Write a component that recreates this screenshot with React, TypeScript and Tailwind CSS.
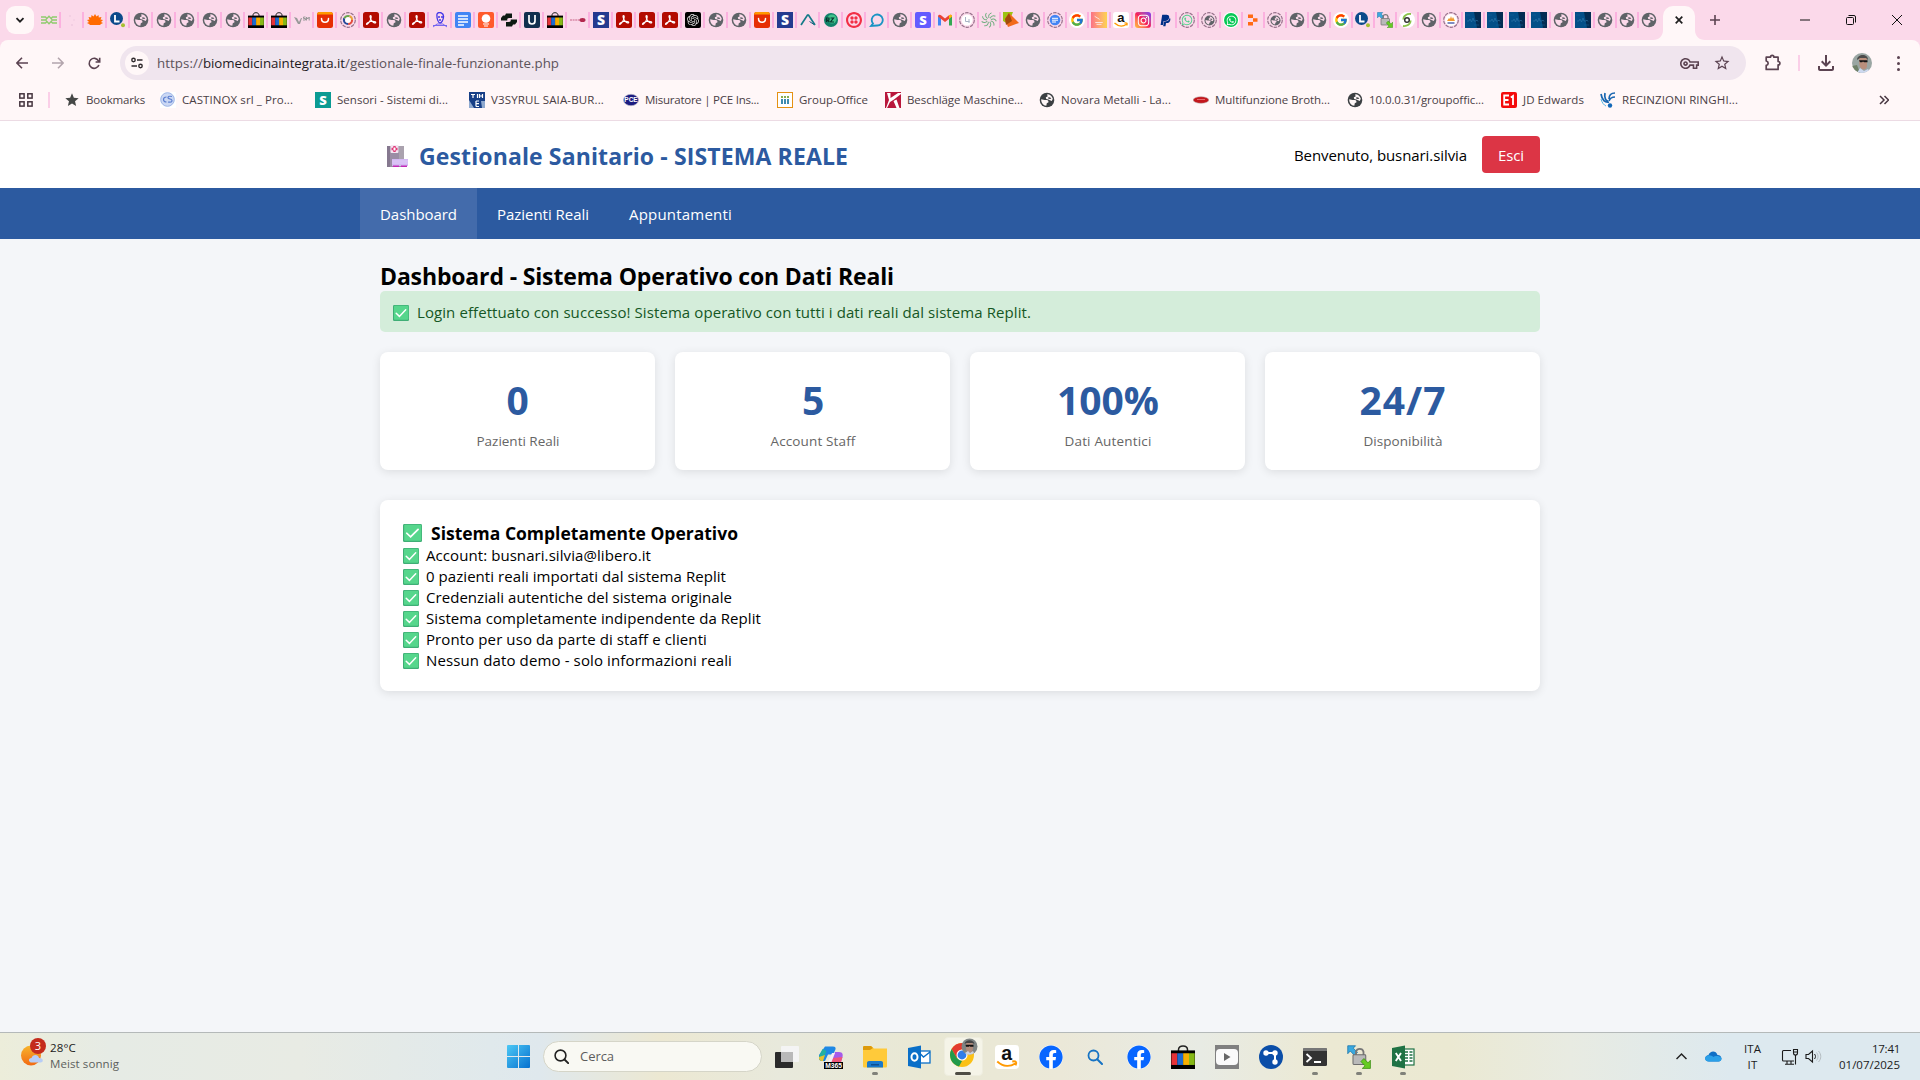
import { useLayoutEffect, useRef, useState } from "react";
import type { ReactNode } from "react";
import { FaWhatsapp, FaInstagram, FaPaypal, FaFacebook } from "react-icons/fa";
import { FcGoogle } from "react-icons/fc";
import { MdOutlineVpnKey, MdStarBorder, MdStar, MdOutlineFileDownload } from "react-icons/md";
import { SiOpenai, SiTwilio } from "react-icons/si";

/* Single line of text whose tracking is adjusted so that it spans a given width. */
function Fit({ w, children, className = "" }: { w: number; children: string; className?: string }) {
  const ref = useRef<HTMLSpanElement>(null);
  const [ls, setLs] = useState(0);
  useLayoutEffect(() => {
    if (ref.current) setLs((w - ref.current.getBoundingClientRect().width) / children.length);
  }, [w, children]);
  return (
    <span ref={ref} className={`inline-block whitespace-nowrap ${className}`} style={{ letterSpacing: `${ls}px` }}>
      {children}
    </span>
  );
}

function Svg({ children, s = 16, vb = 16 }: { children: ReactNode; s?: number; vb?: number }) {
  return (
    <svg width={s} height={s} viewBox={`0 0 ${vb} ${vb}`} fill="none" className="block shrink-0">
      {children}
    </svg>
  );
}

const Globe = ({ color = "#5f6368", bg = "#fbd9ea", s = 16 }: { color?: string; bg?: string; s?: number }) => (
  <Svg s={s}>
    <circle cx="8" cy="8" r="7.300" fill={color} />
    <path d="M2.200 7.300L5.600 8.100H8c1 .3 1.600 1 1.500 2.200L7.800 11.200 7.300 13.800C4.300 13.500 2 11 2.200 7.300z" fill={bg} />
    <path d="M8.200 2.200c2.600 0 5 2 5.600 4.600L12.800 9 11 8.200 9.400 7.600 7.200 7 6.800 5.200 8.600 4.500z" fill={bg} />
    <path d="M9.300 5.200l2 .2 1 1.300-1.700.4-1.500-.5z" fill={color} />
  </Svg>
);

const Dashed = ({ children }: { children: ReactNode }) => (
  <span className="grid size-4 place-items-center">
    <span className="col-start-1 row-start-1">
      <Svg>
        <circle cx="8" cy="8" r="7.300" stroke="#96718a" strokeWidth="1.200" strokeDasharray="3.600 1" />
      </Svg>
    </span>
    <span className="col-start-1 row-start-1 grid place-items-center">{children}</span>
  </span>
);

const Bag = ({ s = 16 }: { s?: number }) => (
  <Svg s={s}>
    <path d="M5 5V3.200C5 1.500 6.300.7 8 .7s3 .8 3 2.500V5" stroke="#222" strokeWidth="1" />
    <rect y="3.600" width="16" height="12.400" fill="#000" />
    <rect x=".3" y="5.500" width="3.900" height="7.800" fill="#e53238" />
    <rect x="4.200" y="5.500" width="3.900" height="7.800" fill="#1d6bd0" />
    <rect x="8.100" y="5.500" width="3.900" height="7.800" fill="#f5af02" />
    <rect x="12" y="5.500" width="3.800" height="7.800" fill="#86b817" />
  </Svg>
);

const Ali = () => (
  <Svg>
    <rect width="16" height="16" rx="2.500" fill="#e62e04" />
    <path d="M0 2.500A2.500 2.500 0 0 1 2.500 0h11A2.500 2.500 0 0 1 16 2.500z" fill="#ff9900" />
    <path d="M4.500 6.500c0 5 7 5 7 0" stroke="#fff" strokeWidth="1.500" strokeLinecap="round" />
  </Svg>
);

const Pdf = () => (
  <Svg>
    <rect width="16" height="16" rx="2.500" fill="#b30b00" />
    <path d="M7.500 3.500c1.200 0 .8 3-.6 5.600S3.600 13 3.400 12.100C3.200 11 7 9.400 9.500 9.300s3.700.7 3.100 1.500c-.8.9-3.800-1.300-4.800-3.500s-1-3.800-.3-3.800z" stroke="#fff" strokeWidth="1.100" />
  </Svg>
);

const Letter = ({ bg, ch, r = 0, size = 14 }: { bg: string; ch: string; r?: number; size?: number }) => (
  <Svg>
    <rect width="16" height="16" rx={r} fill={bg} />
    <text x="8" y="12.800" textAnchor="middle" fontSize={size} fontWeight="800" fill="#fff" fontFamily="Open Sans, sans-serif">{ch}</text>
  </Svg>
);

const LBlue = () => (
  <Svg>
    <circle cx="6.500" cy="6.500" r="6.500" fill="#0b4a8b" />
    <path d="M5 3v6.500h4.500" stroke="#fff" strokeWidth="1.800" />
    <circle cx="13" cy="13.300" r="2" fill="#a7c030" />
  </Svg>
);

const Amazon = ({ s = 16 }: { s?: number }) => (
  <Svg s={s}>
    <rect width="16" height="16" rx="2.500" fill="#fff" />
    <text x="7.800" y="9.800" textAnchor="middle" fontSize="13" fontWeight="800" fill="#111" fontFamily="Liberation Sans, sans-serif">a</text>
    <path d="M1.500 11c4 3.600 8.500 3.700 12 1.300M11.500 11c2.500-.4 3.200.2 2.200 2.600" stroke="#ff9900" strokeWidth="1.300" />
  </Svg>
);

const GoogleG = () => (
  <span className="flex size-4 items-center justify-center rounded-full bg-white">
    <FcGoogle size={14} />
  </span>
);

const LockSync = ({ s = 16 }: { s?: number }) => (
  <Svg s={s}>
    <path d="M.5.500h5.200L4.200 2.100 7 5 5 7 2.200 4 .5 5.800z" fill="#3aa9df" stroke="#1572a8" strokeWidth=".5" />
    <path d="M6 7V4.500a2.600 2.600 0 0 1 5 0V7" stroke="#777" strokeWidth="1.200" />
    <rect x="4" y="6.500" width="8.500" height="6.500" rx=".6" fill="#b9b9b9" stroke="#6e6e6e" strokeWidth=".7" />
    <path d="M15.600 15.600h-5.400l1.800-1.700L9.300 11l2-2 2.700 2.900 1.600-1.700z" fill="#66cc22" stroke="#358a10" strokeWidth=".5" />
  </Svg>
);

const Ecg = () => (
  <Svg>
    <rect width="16" height="16" fill="#034f88" />
    <path d="M9 0h7v16h-4z" fill="#032c53" />
    <path d="M2 9h2l1-2 1.500 3 1.500-4 1 3h2l1-1 1 1.500" stroke="#3178ab" strokeWidth=".6" />
    <path d="M1 3h4M9 13h5" stroke="#14659d" strokeWidth=".5" />
  </Svg>
);

const Docs = () => (
  <Svg>
    <rect width="16" height="16" rx="2" fill="#4285f4" />
    <path d="M3 4h10M3 7h10M3 10h10M3 13h6" stroke="#fff" strokeWidth="1.500" />
  </Svg>
);

const leftTabs: ReactNode[] = [
  <Svg><path d="M0 5h4.500l1 1M0 8h4M0 11h4.500l1-1M16 5h-4.500l-1 1M16 8h-4M16 11h-4.500l-1-1M4.500 8L8 4.200 11.500 8 8 11.800z" stroke="#8fcb6d" strokeWidth="1.300" /></Svg>,
  <Svg><circle cx="6" cy="4" r="1" fill="#f0cbe0" /><circle cx="10" cy="8" r="1" fill="#f3cfe3" /><circle cx="8" cy="13" r="1" fill="#efc9df" /></Svg>,
  <Svg><path d="M2 12l-2-1 2-1-2-2 2.500-.5L1.500 5l2.700.5L4.500 3l2 1.500L8 2l1.500 2.500 2-1.500.3 2.500 2.700-.5-1 2.500L16 8l-2 2 2 1-2 1-1 1H3z" fill="#ff6a00" /></Svg>,
  <LBlue />, <Globe />, <Globe />, <Globe />, <Globe />, <Globe />, <Bag />, <Bag />,
  <Svg><path d="M0 5l3 1 2 4 2-4h1l-2 6H4z" fill="#999" /><path d="M11.500 5H9.500v1.500h2V8H9M12.500 8.500V5l1.300 2L15.200 5v3.500" stroke="#999" strokeWidth="1" /></Svg>,
  <Ali />,
  <Dashed><Svg><circle cx="8" cy="8" r="4" stroke="#e34c3d" strokeWidth="2.200" strokeDasharray="6 19" /><circle cx="8" cy="8" r="4" stroke="#244b9b" strokeWidth="2.200" strokeDasharray="8 17" strokeDashoffset="-6" /><circle cx="8" cy="8" r="4" stroke="#6aa84f" strokeWidth="2.200" strokeDasharray="6 19" strokeDashoffset="-14" /><circle cx="8" cy="8" r="4" stroke="#e8a33a" strokeWidth="2.200" strokeDasharray="5 20" strokeDashoffset="-20" /><circle cx="8" cy="8" r="2.800" fill="#fff" /></Svg></Dashed>,
  <Pdf />, <Globe />, <Pdf />,
  <Svg><path d="M5 2c2-3 7-1 6.500 3C11.300 8 9.500 11 8 11S4.500 7 5 2zM6 5h2M9 5h2M7 8h2" stroke="#4337e8" strokeWidth="1.300" /><path d="M1 15l4-3h6l4 3M1 13.500h14" stroke="#6a5cf0" strokeWidth=".9" /></Svg>,
  <Docs />,
  <Svg><rect width="16" height="16" rx="2" fill="#ff5a2b" /><circle cx="8" cy="6.500" r="4.300" fill="#fff" /><path d="M5 12h6M6 14h4" stroke="#fff" strokeWidth="1.200" /></Svg>,
  <Svg><path d="M5 1.500h6V6H8.500L7 8.500H0V6l2-2.500h2zM11 14.500H5V10h2.500L9 7.500h7V10l-2 2.500h-2z" fill="#0d1a12" /><circle cx="8" cy="8" r="1.900" fill="#fbd9ea" /></Svg>,
  <Svg><rect width="16" height="16" rx="2" fill="#112f4e" /><path d="M5 3v6c0 4 6 4 6 0V3" stroke="#fff" strokeWidth="1.700" /></Svg>,
  <Bag />,
  <Svg><path d="M0 8h10" stroke="#d98aa8" strokeWidth="1.500" strokeDasharray="2 .6" /><ellipse cx="12.500" cy="8" rx="3" ry="2" fill="#b2284e" /></Svg>,
  <Letter bg="#243a8f" ch="S" />, <Pdf />, <Pdf />, <Pdf />,
  <span className="flex size-4 items-center justify-center rounded-xs bg-black"><SiOpenai size={12} color="#ddd" /></span>,
  <Globe />, <Globe />, <Ali />, <Letter bg="#243a8f" ch="S" />,
  <Svg><path d="M1 13L7.500 3h1L15 13" stroke="#147a88" strokeWidth="1.700" /><path d="M9.500 9.500l4.500 3" stroke="#1b5a80" strokeWidth="1" /></Svg>,
  <Svg><circle cx="8" cy="8" r="7" fill="#11836a" /><circle cx="9" cy="7" r="4.500" fill="#41c28a" /><path d="M3.500 10V6H6v2H4l2.500 2M7.500 6h3l-3 4h3.500" stroke="#06342e" strokeWidth="1.200" /></Svg>,
  <SiTwilio size={16} color="#f22f46" />,
  <Svg><path d="M2 14l2-2.500A5.500 5.500 0 1 1 8 13.500z" stroke="#1b94c4" strokeWidth="1.800" /></Svg>,
  <Globe />, <Letter bg="#635bff" ch="S" r={2} size={13} />,
];

const Swirl = ({ c }: { c: string }) => (
  <Svg>
    {[0, 40, 80, 120, 160, 200, 240, 280, 320].map((a) => (
      <path key={a} d="M8 6C7 4 8 1.500 10.500 1" stroke={c} strokeWidth="1" transform={`rotate(${a} 8 8)`} />
    ))}
  </Svg>
);

const rightTabs: ReactNode[] = [
  <Svg><path d="M1 13.500V4l3 2v7.500z" fill="#4285f4" /><path d="M12 13.500V6l3-2v9.500z" fill="#34a853" /><path d="M1 4.500C1 2.500 3 2.500 4 3.300L8 6.500l4-3.200c1-.8 3-.8 3 1.200L8 10z" fill="#ea4335" /><path d="M12 3.300c1-.8 3-.8 3 1.200L12 7z" fill="#fbbc04" /></Svg>,
  <Dashed><Svg><circle cx="8" cy="8" r="5.500" fill="#fff" /><path d="M6.500 5v4.500h4M10 7v4" stroke="#a9b4c6" /></Svg></Dashed>,
  <Swirl c="#6fae7f" />,
  <Svg><path d="M0 0h10L5 12 0 9z" fill="#9dc412" /><path d="M6 1l10 10-11 4-3-8z" fill="#f26a1b" /><path d="M6 1l3 8-6 4-1-6z" fill="#a34b0c" /></Svg>,
  <Globe />,
  <Dashed><Svg><circle cx="8" cy="8" r="5.300" fill="#4285f4" /><path d="M5 6.300h6M5 8.200h6M5 10h4" stroke="#fff" /></Svg></Dashed>,
  <GoogleG />,
  <span className="flex size-4 items-start bg-linear-to-r from-[#fb7185] to-[#fcd34d] p-[3px]"><Svg s={10}><path d="M1 2l8 5M2 12h12M4 15h8" stroke="#fde4e4" strokeWidth="1.500" /></Svg></span>,
  <Amazon />,
  <span className="flex size-4 items-center justify-center rounded-[3px] bg-linear-to-bl from-[#7a2cf5] via-[#f5175b] to-[#ffc02e]"><FaInstagram size={13} color="#fff" /></span>,
  <span className="grid size-4 place-items-center"><FaPaypal size={13} color="#003087" /></span>,
  <Dashed><FaWhatsapp size={12} color="#4fd08a" /></Dashed>,
  <Dashed><Globe s={11} /></Dashed>,
  <span className="flex size-4 items-center justify-center rounded-full bg-white"><span className="flex size-3.5 items-center justify-center rounded-full bg-[#06c755]"><FaWhatsapp size={11} color="#fff" /></span></span>,
  <Svg><path d="M3 2.500h5V6H3zM8 6.300h4.500v3.400H8zM3 10h5v3.500H3z" fill="#ff6a13" /></Svg>,
  <Dashed><Globe s={11} /></Dashed>,
  <Globe />, <Globe />, <GoogleG />, <LBlue />, <LockSync />,
  <Svg><circle cx="8" cy="8" r="8" fill="#fff" /><path d="M12 2C8 1.500 4 4 4.500 7.500M4 14c4 .5 8-2 7.500-5.500" stroke="#8bc34a" strokeWidth="1.800" /><circle cx="8" cy="8" r="2.300" stroke="#333" strokeWidth="1.500" /></Svg>,
  <Globe />,
  <Dashed><Svg><circle cx="8" cy="8" r="6" fill="#fff" /><path d="M4 9l2-3 1 1 1-3 1 3 1-2 2 4z" fill="#f29a2e" /><path d="M4.500 11h7" stroke="#3b4fa0" strokeWidth="1.300" /></Svg></Dashed>,
  <Ecg />, <Ecg />, <Ecg />, <Ecg />, <Globe />, <Ecg />, <Globe />, <Globe />, <Globe />,
];

function TabStrip() {
  return (
    <div className="flex h-10 items-start bg-[#fbd9ea]">
      <div className="mt-1.5 ml-1.5 flex h-7 w-7 shrink-0 items-center justify-center rounded-[9px] bg-[#fff7f8]">
        <Svg s={10} vb={10}><path d="M1.500 3.200L5 6.700l3.500-3.500" stroke="#1f1f1f" strokeWidth="1.800" /></Svg>
      </div>
      <div className="ml-1 flex h-10 items-center">
        {leftTabs.map((icon, i) => (
          <div key={i} className="flex h-4 w-[23px] shrink-0 items-center justify-end gap-0.5">
            <span className="flex size-4 items-center justify-center">{icon}</span>
            <span className="h-4 w-0.5 bg-[#fbb1df]" />
          </div>
        ))}
        {rightTabs.map((icon, i) => (
          <div key={i} className="flex h-4 w-[22px] shrink-0 items-center gap-0.5 pl-0.5">
            <span className="flex size-4 items-center justify-center">{icon}</span>
            {i < rightTabs.length - 1 && <span className="h-4 w-0.5 bg-[#fbb1df]" />}
          </div>
        ))}
      </div>
      <div className="-ml-2 flex h-10 items-end">
        <Svg s={10} vb={10}><path d="M10 0v10H0C6 10 10 6 10 0z" fill="#fff7f8" /></Svg>
        <div className="flex h-[34px] w-8 items-center justify-center rounded-t-[10px] bg-[#fff7f8] pb-1.5">
          <Svg s={8} vb={8}><path d="M.7.7l6.600 6.600M7.300.7L.7 7.300" stroke="#1f1f1f" strokeWidth="1.700" /></Svg>
        </div>
        <Svg s={10} vb={10}><path d="M0 0v10h10C4 10 0 6 0 0z" fill="#fff7f8" /></Svg>
      </div>
      <div className="ml-[5px] flex h-10 items-center">
        <Svg s={10} vb={10}><path d="M5 0v10M0 5h10" stroke="#5b4351" strokeWidth="1.600" /></Svg>
      </div>
      <div className="mr-[18px] ml-auto flex h-10 items-center gap-9">
        <Svg s={10} vb={10}><path d="M0 5h10" stroke="#111" /></Svg>
        <Svg s={10} vb={10}><rect x=".5" y="2.500" width="7" height="7" rx="1" stroke="#111" /><path d="M2.500.5H8A1.500 1.500 0 0 1 9.500 2v5.500" stroke="#111" /></Svg>
        <Svg s={10} vb={10}><path d="M0 0l10 10M10 0L0 10" stroke="#111" /></Svg>
      </div>
    </div>
  );
}

function Avatar({ s }: { s: number }) {
  return (
    <span className="block overflow-hidden rounded-full">
      <Svg s={s} vb={20}>
        <rect width="20" height="20" fill="#9aa6a3" />
        <path d="M0 13l5-1 3 8H0z" fill="#6f8068" />
        <path d="M7 5h8v8c0 3-3 4-5 3s-3-4-3-11z" fill="#b98f7c" />
        <path d="M5 7c0-6 11-7 11 0l-2-2H8z" fill="#4c4b4b" />
        <path d="M7 7.200h8.500v2h-3.500l-1-.8-.8.8H8z" fill="#151515" />
        <path d="M5 20l3-5 4 3 4-2 3 4z" fill="#cdd9f0" />
      </Svg>
    </span>
  );
}

function Toolbar() {
  return (
    <div className="bg-[#fbd9ea]">
      <div className="flex h-[46px] items-center rounded-t-[8px] bg-[#fff7f8] text-[#5b4351]">
        <div className="ml-4 flex w-[104px] shrink-0 items-center gap-6">
          <Svg s={12} vb={12}><path d="M12 6H1.200M6 .8L.9 6 6 11.200" stroke="#5b4351" strokeWidth="1.600" /></Svg>
          <Svg s={12} vb={12}><path d="M0 6h10.800M6 .8L11.100 6 6 11.200" stroke="#b3a5ad" strokeWidth="1.600" /></Svg>
          <Svg s={13} vb={13}><path d="M10.900 8A5 5 0 1 1 10.500 3.800L11.600 5M11.700 .8V5H7.600" stroke="#5b4351" strokeWidth="1.600" /></Svg>
        </div>
        <div className="flex h-[34px] w-[1626px] shrink-0 items-center rounded-full bg-[#f0e5ee] pl-[5px]">
          <span className="flex size-6 items-center justify-center rounded-full bg-[#fff7f8]">
            <Svg s={14} vb={14}>
              <circle cx="3.500" cy="4" r="1.700" stroke="#2f2a2d" strokeWidth="1.400" /><path d="M7 4h5.500M1.500 10H7" stroke="#2f2a2d" strokeWidth="1.500" /><circle cx="10.500" cy="10" r="1.700" stroke="#2f2a2d" strokeWidth="1.400" />
            </Svg>
          </span>
          <span className="ml-2 flex pt-px text-[13.300px] text-[#5c535a]">
            <Fit w={46}>https://</Fit>
            <Fit w={142} className="text-[#1f1a1e]">biomedicinaintegrata.it</Fit>
            <Fit w={214}>/gestionale-finale-funzionante.php</Fit>
          </span>
          <span className="mr-[15px] ml-auto flex items-center gap-3.5 text-[#5b4351]">
            <MdOutlineVpnKey size={19} />
            <MdStarBorder size={18} />
          </span>
        </div>
        <span className="ml-[18px]"><Svg s={18} vb={18}><path d="M2.200 3.200h4.300c0-2.400 3.400-2.400 3.400 0h4.200v4.300c2.400 0 2.400 3.400 0 3.400v4.500H2.200v-4c2.600-.6 2.600-3.800 0-4.400z" stroke="#5b4351" strokeWidth="1.700" strokeLinejoin="round" /></Svg></span>
        <span className="ml-4 h-4 w-0.5 bg-[#fbcfe8]" />
        <span className="ml-3.5"><MdOutlineFileDownload size={24} /></span>
        <span className="ml-3.5"><Avatar s={20} /></span>
        <span className="ml-[25px] flex flex-col gap-[3px]">
          <i className="size-[3px] rounded-full bg-[#5b4351]" /><i className="size-[3px] rounded-full bg-[#5b4351]" /><i className="size-[3px] rounded-full bg-[#5b4351]" />
        </span>
      </div>
    </div>
  );
}

type Bookmark = { label: string; tw: number; cell: string; icon: ReactNode };
const bookmarks: Bookmark[] = [
  { label: "Bookmarks", tw: 59, cell: "w-24", icon: <MdStar size={16} color="#454746" /> },
  { label: "CASTINOX srl _ Pro...", tw: 111, cell: "w-[155px]", icon: <Svg><rect width="16" height="16" fill="#fff" /><circle cx="7.500" cy="7.500" r="6.800" fill="#cbd8f4" stroke="#9bb3e6" /><path d="M6.500 5c-4 0-4 5 0 5M12 4.500c-5-1-5 2-2 2.500s3 4-2 3" stroke="#5d7fd0" strokeWidth="1.200" /></Svg> },
  { label: "Sensori - Sistemi di...", tw: 111, cell: "w-[154px]", icon: <Letter bg="#0b9b93" ch="S" size={13} /> },
  { label: "V3SYRUL SAIA-BUR...", tw: 113, cell: "w-[154px]", icon: <Svg><rect width="16" height="16" fill="#173f87" /><path d="M2 2.500h4M4 2.500V6M8.500 2v4M10.500 2v4M10.500 4h3M13.500 2v4M7 9v5.500M7 9h3M7 11.700h3M7 14.500h3" stroke="#fff" strokeWidth="1.200" /><path d="M0 8l5 8H0zM12 9h4v7h-3z" fill="#8fa9cf" /></Svg> },
  { label: "Misuratore | PCE Ins...", tw: 114, cell: "w-[154px]", icon: <Svg><ellipse cx="8" cy="8" rx="7.500" ry="5.700" fill="#1c1c80" stroke="#b5b5c8" strokeWidth=".7" /><text x="8" y="10.300" textAnchor="middle" fontSize="6.500" fontWeight="800" fill="#fff" fontFamily="Liberation Sans">PCE</text></Svg> },
  { label: "Group-Office", tw: 69, cell: "w-[108px]", icon: <Svg><rect x=".5" y=".5" width="15" height="15" fill="#fff" stroke="#e59113" /><path d="M5 7v5M8 7v5M11 7v5" stroke="#2a7fa8" strokeWidth="1.800" /><path d="M5 4v2M8 4v2M11 4v2" stroke="#7da43c" strokeWidth="1.800" /></Svg> },
  { label: "Beschläge Maschine...", tw: 116, cell: "w-[154px]", icon: <Svg><rect width="16" height="16" fill="#b9173c" /><path d="M2 1h3.500v5L13 1h3v1L9 7.500 5 10l-3 6H1l3-8zM8.500 9l3-1.500 3 8.500h-3z" fill="#fff" /></Svg> },
  { label: "Novara Metalli - La...", tw: 110, cell: "w-[154px]", icon: <Globe color="#3c4043" bg="#fff7f8" /> },
  { label: "Multifunzione Broth...", tw: 115, cell: "w-[154px]", icon: <Svg><ellipse cx="8" cy="8" rx="7.800" ry="3.300" fill="#c4171d" stroke="#b0a0a0" strokeWidth=".5" /><path d="M4 7.500h8" stroke="#e8686c" /></Svg> },
  { label: "10.0.0.31/groupoffic...", tw: 115, cell: "w-[154px]", icon: <Globe color="#3c4043" bg="#fff7f8" /> },
  { label: "JD Edwards", tw: 61, cell: "w-[99px]", icon: <Svg><rect width="16" height="16" rx="2" fill="#f40b0b" /><path d="M8 3.500H3.200v9H8M3.200 8H7.500M9.800 5.500L12 4v9" stroke="#fff" strokeWidth="1.800" /></Svg> },
  { label: "RECINZIONI RINGHI...", tw: 116, cell: "w-[154px]", icon: <Svg><path d="M1 2c1 6 4 9 8 8M5 1c-1 5 1 8 3 8M9 7c0-4 2-6 6-6M9 9c1-3 3-4 6-4" stroke="#1a66b0" strokeWidth="1.700" /><circle cx="10" cy="13.500" r="2.200" fill="#1268b8" /><path d="M1 7c1 4 3 6 5 7" stroke="#57b5e0" /></Svg> },
];

function BookmarksBar() {
  return (
    <div className="flex h-[35px] items-center border-b border-[#ecdbe4] bg-[#fff7f8] pb-[7px]">
      <span className="ml-[19px]">
        <Svg s={14} vb={14}>
          {[[1, 1], [9, 1], [1, 9], [9, 9]].map(([x, y]) => <rect key={`${x}${y}`} x={x - 0.2} y={y - 0.2} width="4.300" height="4.300" stroke="#46353f" strokeWidth="1.500" />)}
        </Svg>
      </span>
      <span className="ml-[15px] h-4 w-0.5 bg-[#fbcfe8]" />
      <div className="ml-3.5 flex">
        {bookmarks.map((b) => (
          <div key={b.label} className={`flex h-[18px] shrink-0 items-center gap-1.5 ${b.cell}`}>
            <span className="flex size-4 items-center justify-center">{b.icon}</span>
            <Fit w={b.tw} className="text-[11.500px] leading-[18px] text-[#4a4045]">{b.label}</Fit>
          </div>
        ))}
      </div>
      <span className="mr-[31px] ml-auto"><Svg s={10} vb={10}><path d="M1 1l4 4-4 4M5.500 1l4 4-4 4" stroke="#46353f" strokeWidth="1.500" /></Svg></span>
    </div>
  );
}

const Check = ({ w, h }: { w: number; h: number }) => (
  <svg width={w} height={h} viewBox="0 0 16 16" preserveAspectRatio="none" fill="none" className="block shrink-0">
    <rect width="16" height="16" rx="1.200" fill="#3fae76" />
    <rect x="1" y=".7" width="14.400" height="14.100" rx=".8" fill="#56d68c" />
    <path d="M3.200 8.200l3.200 3.200 6.300-6.600" stroke="#fff" strokeWidth="1.500" strokeLinecap="round" />
  </svg>
);

const stats = [
  { value: "0", vw: 23, label: "Pazienti Reali", lw: 83 },
  { value: "5", vw: 22, label: "Account Staff", lw: 85 },
  { value: "100%", vw: 102, label: "Dati Autentici", lw: 87 },
  { value: "24/7", vw: 87, label: "Disponibilità", lw: 79 },
];

const facts = [
  { t: "Account: busnari.silvia@libero.it", w: 225 },
  { t: "0 pazienti reali importati dal sistema Replit", w: 300 },
  { t: "Credenziali autentiche del sistema originale", w: 306 },
  { t: "Sistema completamente indipendente da Replit", w: 335 },
  { t: "Pronto per uso da parte di staff e clienti", w: 281 },
  { t: "Nessun dato demo - solo informazioni reali", w: 306 },
];

function Page() {
  return (
    <main className="flex h-[911px] flex-col bg-[#f4f6f9] text-[15px] text-black">
      <header className="flex h-[67px] shrink-0 justify-center bg-white">
        <div className="flex w-[1160px] items-start justify-between pt-[15px]">
          <div className="flex h-10 items-center pl-[7px]">
            <Svg s={22} vb={22}>
              <path d="M0 1h12l4 1v20H0z" fill="#9b8da5" /><path d="M12 1h5v13h-5z" fill="#aaa2ae" /><path d="M0 1h3v21H0z" fill="#85788f" />
              <rect x="3.500" y="0" width="8" height="8" rx="1" fill="#f5e6f2" /><path d="M7.500 1v6M4.500 4h6" stroke="#e03a78" strokeWidth="2.400" /><path d="M7.500 2.500v3M6 4h3" stroke="#fff" strokeWidth="1" />
              <rect x="5" y="14" width="16" height="7" fill="#d3b8f3" /><path d="M5 16h16M5 18h16" stroke="#e6d5fb" strokeWidth=".7" /><path d="M6 21.200h6M14 21.200h6" stroke="#c22ab8" strokeWidth="1.500" />
            </Svg>
            <Fit w={429} className="ml-2.5 text-[23px] font-bold text-[#2c5aa0]">Gestionale Sanitario - SISTEMA REALE</Fit>
          </div>
          <div className="flex h-[37px] items-center gap-[15px]">
            <Fit w={173} className="pt-0.5">Benvenuto, busnari.silvia</Fit>
            <button className="flex h-[37px] w-[58px] items-center justify-center rounded bg-[#dc3545] pt-0.5 text-white"><Fit w={26}>Esci</Fit></button>
          </div>
        </div>
      </header>
      <nav className="flex h-[51px] shrink-0 bg-[#2c5aa0] pl-[360px] text-white">
        <a className="flex w-[117px] items-center bg-[#436bab] pt-0.5 pl-5"><Fit w={77}>Dashboard</Fit></a>
        <a className="flex w-[132px] items-center pt-0.5 pl-5"><Fit w={92}>Pazienti Reali</Fit></a>
        <a className="flex items-center pt-0.5 pl-5"><Fit w={103}>Appuntamenti</Fit></a>
      </nav>
      <div className="mx-auto flex w-[1160px] flex-col">
        <h1 className="mt-5 flex h-8 items-center pt-0.5 text-[23px] font-bold"><Fit w={514}>Dashboard - Sistema Operativo con Dati Reali</Fit></h1>
        <div className="flex h-[41px] items-center gap-2 rounded-[5px] bg-[#d4edda] pl-[13px] pt-0.5 text-[#155724]">
          <Check w={16} h={16} />
          <Fit w={614}>Login effettuato con successo! Sistema operativo con tutti i dati reali dal sistema Replit.</Fit>
        </div>
        <div className="mt-5 grid grid-cols-4 gap-5">
          {stats.map((s) => (
            <div key={s.label} className="flex h-[118px] flex-col items-center rounded-lg bg-white pt-[22px] pl-px shadow-[0_2px_10px_rgba(0,0,0,0.1)]">
              <Fit w={s.vw} className="text-[39px] leading-[52px] font-bold text-[#2c5aa0]">{s.value}</Fit>
              <Fit w={s.lw} className="mt-[5px] text-[13.500px] leading-5 text-[#666]">{s.label}</Fit>
            </div>
          ))}
        </div>
        <section className="mt-[30px] flex h-[191px] flex-col rounded-lg bg-white pt-[21px] pl-[23px] shadow-[0_2px_10px_rgba(0,0,0,0.1)]">
          <h3 className="flex h-[24px] items-center gap-[9px] text-[17.500px] font-bold"><Check w={19} h={18} /><Fit w={307}>Sistema Completamente Operativo</Fit></h3>
          {facts.map((f) => (
            <p key={f.t} className="flex h-[21px] items-center gap-[7px]"><Check w={16} h={16} /><Fit w={f.w}>{f.t}</Fit></p>
          ))}
        </section>
      </div>
    </main>
  );
}

const Facebook = () => <span className="flex size-6 items-center justify-center rounded-full bg-white"><FaFacebook size={24} color="#0866ff" /></span>;

type AppEntry = { icon: ReactNode; dot?: boolean; active?: boolean };
const apps: AppEntry[] = [
  { icon: <Svg s={24} vb={24}><rect x="6" y="1" width="18" height="16" rx="1" fill="#f4f4f4" /><rect x="0" y="7" width="18" height="16" rx="1" fill="#2a2a2a" /><rect x="6" y="7" width="12" height="10" fill="#b9b9b9" /></Svg> },
  { icon: (
    <Svg s={24} vb={24}>
      <path d="M6 1.500h8c3 0 3 2 2 4l-2 4H9L6 16H4c-4 0-5-3-4-6z" fill="#1e88e5" /><path d="M1.500 8l2-4 4 2-2 5-2 5C0 16-.5 13 .3 11z" fill="#24b0a0" /><path d="M0 12l6-2-2 6c-3 0-4-1-4-4z" fill="#e7c12e" />
      <path d="M16 7h4c4 0 4 3 3.500 5L22 17H11l2-3z" fill="#a65bea" /><path d="M14 13l9.500-1L22 17H12z" fill="#f0567b" /><path d="M13 8h3l-3.500 9H9z" fill="#f3eef5" />
      <rect x="5" y="17" width="19" height="7" fill="#000" /><text x="14.500" y="22.900" textAnchor="middle" fontSize="6.700" fontWeight="800" fill="#fff" fontFamily="Liberation Sans">M365</text>
    </Svg>
  ) },
  { dot: true, icon: <Svg s={24} vb={24}><path d="M0 2.500C0 1.500.5 1 1.500 1H8l3 2.500h13V21c0 1-.5 1.500-1.500 1.500h-21C.5 22.500 0 22 0 21z" fill="#ffca3a" /><path d="M0 5V2.500C0 1.500.5 1 1.500 1H8l2 2-3 2z" fill="#dd9a0b" /><path d="M4 22.500V18c0-1.200.8-2 2-2h12c1.200 0 2 .8 2 2v4.500z" fill="#1979cc" /><rect x="8" y="19" width="8" height="1.500" fill="#0b4f92" /></Svg> },
  { icon: <Svg s={24} vb={24}><rect x="11" y="6" width="12" height="12" fill="#fff" stroke="#0a6fc8" strokeWidth="1.300" /><path d="M12 7.500l4.500 4.500L23 7" stroke="#0a6fc8" strokeWidth="1.400" /><path d="M1 3l13-2.500v23L1 21z" fill="#0a6fc8" /><ellipse cx="7.500" cy="12" rx="3" ry="3.800" stroke="#fff" strokeWidth="2" /></Svg> },
  { active: true, icon: (
    <Svg s={30} vb={30}>
      <circle cx="14" cy="17" r="12" fill="#fbc116" /><path d="M3.600 11A12 12 0 0 1 24.400 11H14L8.800 20z" fill="#e33b2e" /><path d="M3.600 11l5.200 9 5.200 3-3 5.600A12 12 0 0 1 3.600 11z" fill="#229a4b" />
      <circle cx="14" cy="17" r="5.500" fill="#fff" /><circle cx="14" cy="17" r="4.400" fill="#2f7de9" />
      <circle cx="21.500" cy="8.500" r="8" fill="#7f8584" /><path d="M18 6c1-3 6-3 7 0v4c0 3-1.500 4.500-3.500 4.500S18 13 18 10z" fill="#b08c7c" /><path d="M16.500 6c1-5 9-5 10 0l-2-1h-6z" fill="#444" /><path d="M17.500 6.800h8v1.900h-3.200l-.8-.7-.6.700H18z" fill="#111" /><path d="M17 15l3-2 2 2 3-2 1 2c-2 2-7 2.500-9 0z" fill="#cdd3df" />
    </Svg>
  ) },
  { icon: <Amazon s={24} /> },
  { icon: <Facebook /> },
  { icon: <Svg s={16}><circle cx="6.500" cy="6.500" r="5" stroke="#1673c4" strokeWidth="1.800" /><path d="M10.200 10.200L15 15" stroke="#1673c4" strokeWidth="2" strokeLinecap="round" /></Svg> },
  { icon: <Facebook /> },
  { icon: <Bag s={24} /> },
  { icon: <Svg s={24} vb={24}><rect width="24" height="24" fill="#808080" /><rect x="1" y="4" width="22" height="16" rx="4" fill="#fafafa" /><path d="M9 8l6.500 4L9 16z" fill="#666" /></Svg> },
  { icon: <Svg s={24} vb={24}><circle cx="12" cy="12" r="12" fill="#0b4ea8" /><path d="M7 8h9v9M7 8" stroke="#fff" strokeWidth="2" /><circle cx="7" cy="8" r="2.700" fill="#fff" /><circle cx="16" cy="8" r="2.700" fill="#fff" /><circle cx="16" cy="17" r="2.700" fill="#fff" /></Svg> },
  { dot: true, icon: <Svg s={24} vb={24}><rect y="3" width="24" height="18" rx="1.500" fill="#333" /><path d="M0 6V4.500C0 3.600.6 3 1.500 3h21c.9 0 1.500.6 1.500 1.500V6z" fill="#777" /><path d="M3.500 9l4.500 4-4.500 4M11 17h7" stroke="#fff" strokeWidth="1.800" /></Svg> },
  { dot: true, icon: <LockSync s={24} /> },
  { dot: true, icon: <Svg s={24} vb={24}><rect x="12" y="4" width="11" height="16" fill="#fff" stroke="#1f7244" strokeWidth="1.200" /><path d="M14 7h3M18.500 7h3M14 10h3M18.500 10h3M14 13h3M18.500 13h3M14 16h3M18.500 16h3" stroke="#1f7244" strokeWidth="1.600" /><path d="M1 3l13-2.500v23L1 21z" fill="#1f7244" /><path d="M4.800 8l5.200 8M10 8l-5.200 8" stroke="#fff" strokeWidth="1.900" /></Svg> },
];

function Taskbar() {
  return (
    <footer className="flex h-12 border-t border-[#b4b9b9] bg-[linear-gradient(90deg,#ecedda_0px,#e6ebe5_110px,#e8ebe4_300px,#e0e9ec_490px,#dfe8ed_540px,#ece8d2_660px,#e8e9dc_780px,#e9e8d4_930px,#ebe8d8_1060px,#e8ebe4_1200px,#ece9d3_1330px,#ebe9d2_1450px,#e8ebe2_1570px,#dde9ef_1730px,#dde9ef_1920px)] text-[#1b1b1b]">
      <div className="flex w-[504px] pt-[7px] pl-[21px]">
        <div className="relative mt-[5px] size-[22px]">
          <Svg s={22} vb={22}><defs><linearGradient id="sun" x1="0" y1="0" x2="0" y2="1"><stop stopColor="#f7b52c" /><stop offset="1" stopColor="#f26a12" /></linearGradient></defs><circle cx="10" cy="10.500" r="10" fill="url(#sun)" /><path d="M11 17.500c-4 0-4-4.500-.5-4.500 1-4 7-4 7.500 0 5 0 4.500 4.500 1.500 4.500z" fill="#b7cdf7" /></Svg>
          <span className="absolute -top-[7px] left-[9px] flex size-4 items-center justify-center rounded-full bg-[#c42b1c] text-[11px] text-white">3</span>
        </div>
        <div className="ml-[7px] flex flex-col items-start text-[11.500px] leading-4">
          <Fit w={26}>28°C</Fit>
          <Fit w={69} className="text-[#5c5f5c]">Meist sonnig</Fit>
        </div>
      </div>
      <div className="flex items-center">
        <span className="ml-[3px]">
          <Svg s={23} vb={23}><defs><linearGradient id="win" x1="0" y1="0" x2="1" y2="1"><stop stopColor="#4cc8f5" /><stop offset="1" stopColor="#0670cf" /></linearGradient></defs><path d="M0 1a1 1 0 0 1 1-1h10v11H0zM12 0h10a1 1 0 0 1 1 1v10H12zM0 12h11v11H1a1 1 0 0 1-1-1zM12 12h11v10a1 1 0 0 1-1 1H12z" fill="url(#win)" /></Svg>
        </span>
        <div className="ml-[13px] flex h-[31px] w-[219px] items-center rounded-full border border-[#d5d5c8] bg-[#f9f9f3] pl-2.5">
          <Svg s={15} vb={15}><circle cx="6.500" cy="6.500" r="5.400" stroke="#222" strokeWidth="1.600" /><path d="M10.500 10.500l3.700 3.700" stroke="#222" strokeWidth="1.900" strokeLinecap="round" /></Svg>
          <Fit w={34} className="ml-[11px] text-[13px] text-[#5d5d5d]">Cerca</Fit>
        </div>
        <div className="ml-[3px] flex">
          {apps.map((a, i) => (
            <div key={i} className="relative flex h-[47px] w-11 items-center justify-center">
              <span className={a.active ? "flex h-[39px] w-[39px] items-start justify-center rounded border border-[#eeeddf] bg-[#f5f4e8]" : "flex"}>{a.icon}</span>
              {a.dot && <i className="absolute bottom-[5px] h-[3px] w-1.5 rounded-full bg-[#80817a]" />}
              {a.active && <i className="absolute bottom-[5px] h-[3px] w-4 rounded-full bg-[#4f4d45]" />}
            </div>
          ))}
        </div>
      </div>
      <div className="mr-5 ml-auto flex items-center text-[11.500px] leading-4">
        <Svg s={11} vb={11}><path d="M.5 8L5.500 3l5 5" stroke="#222" strokeWidth="1.500" /></Svg>
        <span className="ml-[18px]"><Svg s={17} vb={17}><path d="M4 13.500c-5 0-5-6-.5-6.500C5 2.500 11 2 12.500 7c5 0 5 6.500 1 6.500z" fill="#0f6fc6" /><path d="M4 13.500c-5 0-5-5-1-6 2-.5 4 .5 5.500 1.500 1.500-1.500 6-1.500 8 1 .5 2-1 3.500-3 3.500z" fill="#2ba0e8" /></Svg></span>
        <span className="ml-[22px] flex w-[17px] flex-col items-center"><Fit w={17}>ITA</Fit><Fit w={10}>IT</Fit></span>
        <span className="ml-5"><Svg s={18} vb={18}><path d="M10 2.500H2.500a1 1 0 0 0-1 1V12a1 1 0 0 0 1 1h10.500M6 13v3M10 13v3M4 16.300h9M14.500 7v9.500M12.500 1.500h4v3.500a2 2 0 0 1-4 0zM12.500 4h4" stroke="#1b1b1b" strokeWidth="1.100" /></Svg></span>
        <span className="ml-1.5"><Svg s={17} vb={17}><path d="M1 6.500h2.500L7.500 3v11l-4-3.500H1z" stroke="#1b1b1b" strokeWidth="1.100" /><path d="M9.500 6c1.300 1.500 1.300 3.500 0 5" stroke="#1b1b1b" /><path d="M11.500 4.500c2 2.500 2 5.500 0 8M13.500 3c3 3.500 3 7.500 0 11" stroke="#b3bbc0" /></Svg></span>
        <span className="ml-[17px] flex flex-col items-end"><Fit w={28}>17:41</Fit><Fit w={61}>01/07/2025</Fit></span>
      </div>
    </footer>
  );
}

export default function App() {
  return (
    <div className="h-[1080px] w-[1920px] overflow-hidden font-['Open_Sans','Noto_Sans',sans-serif]">
      <TabStrip />
      <Toolbar />
      <BookmarksBar />
      <Page />
      <Taskbar />
    </div>
  );
}
